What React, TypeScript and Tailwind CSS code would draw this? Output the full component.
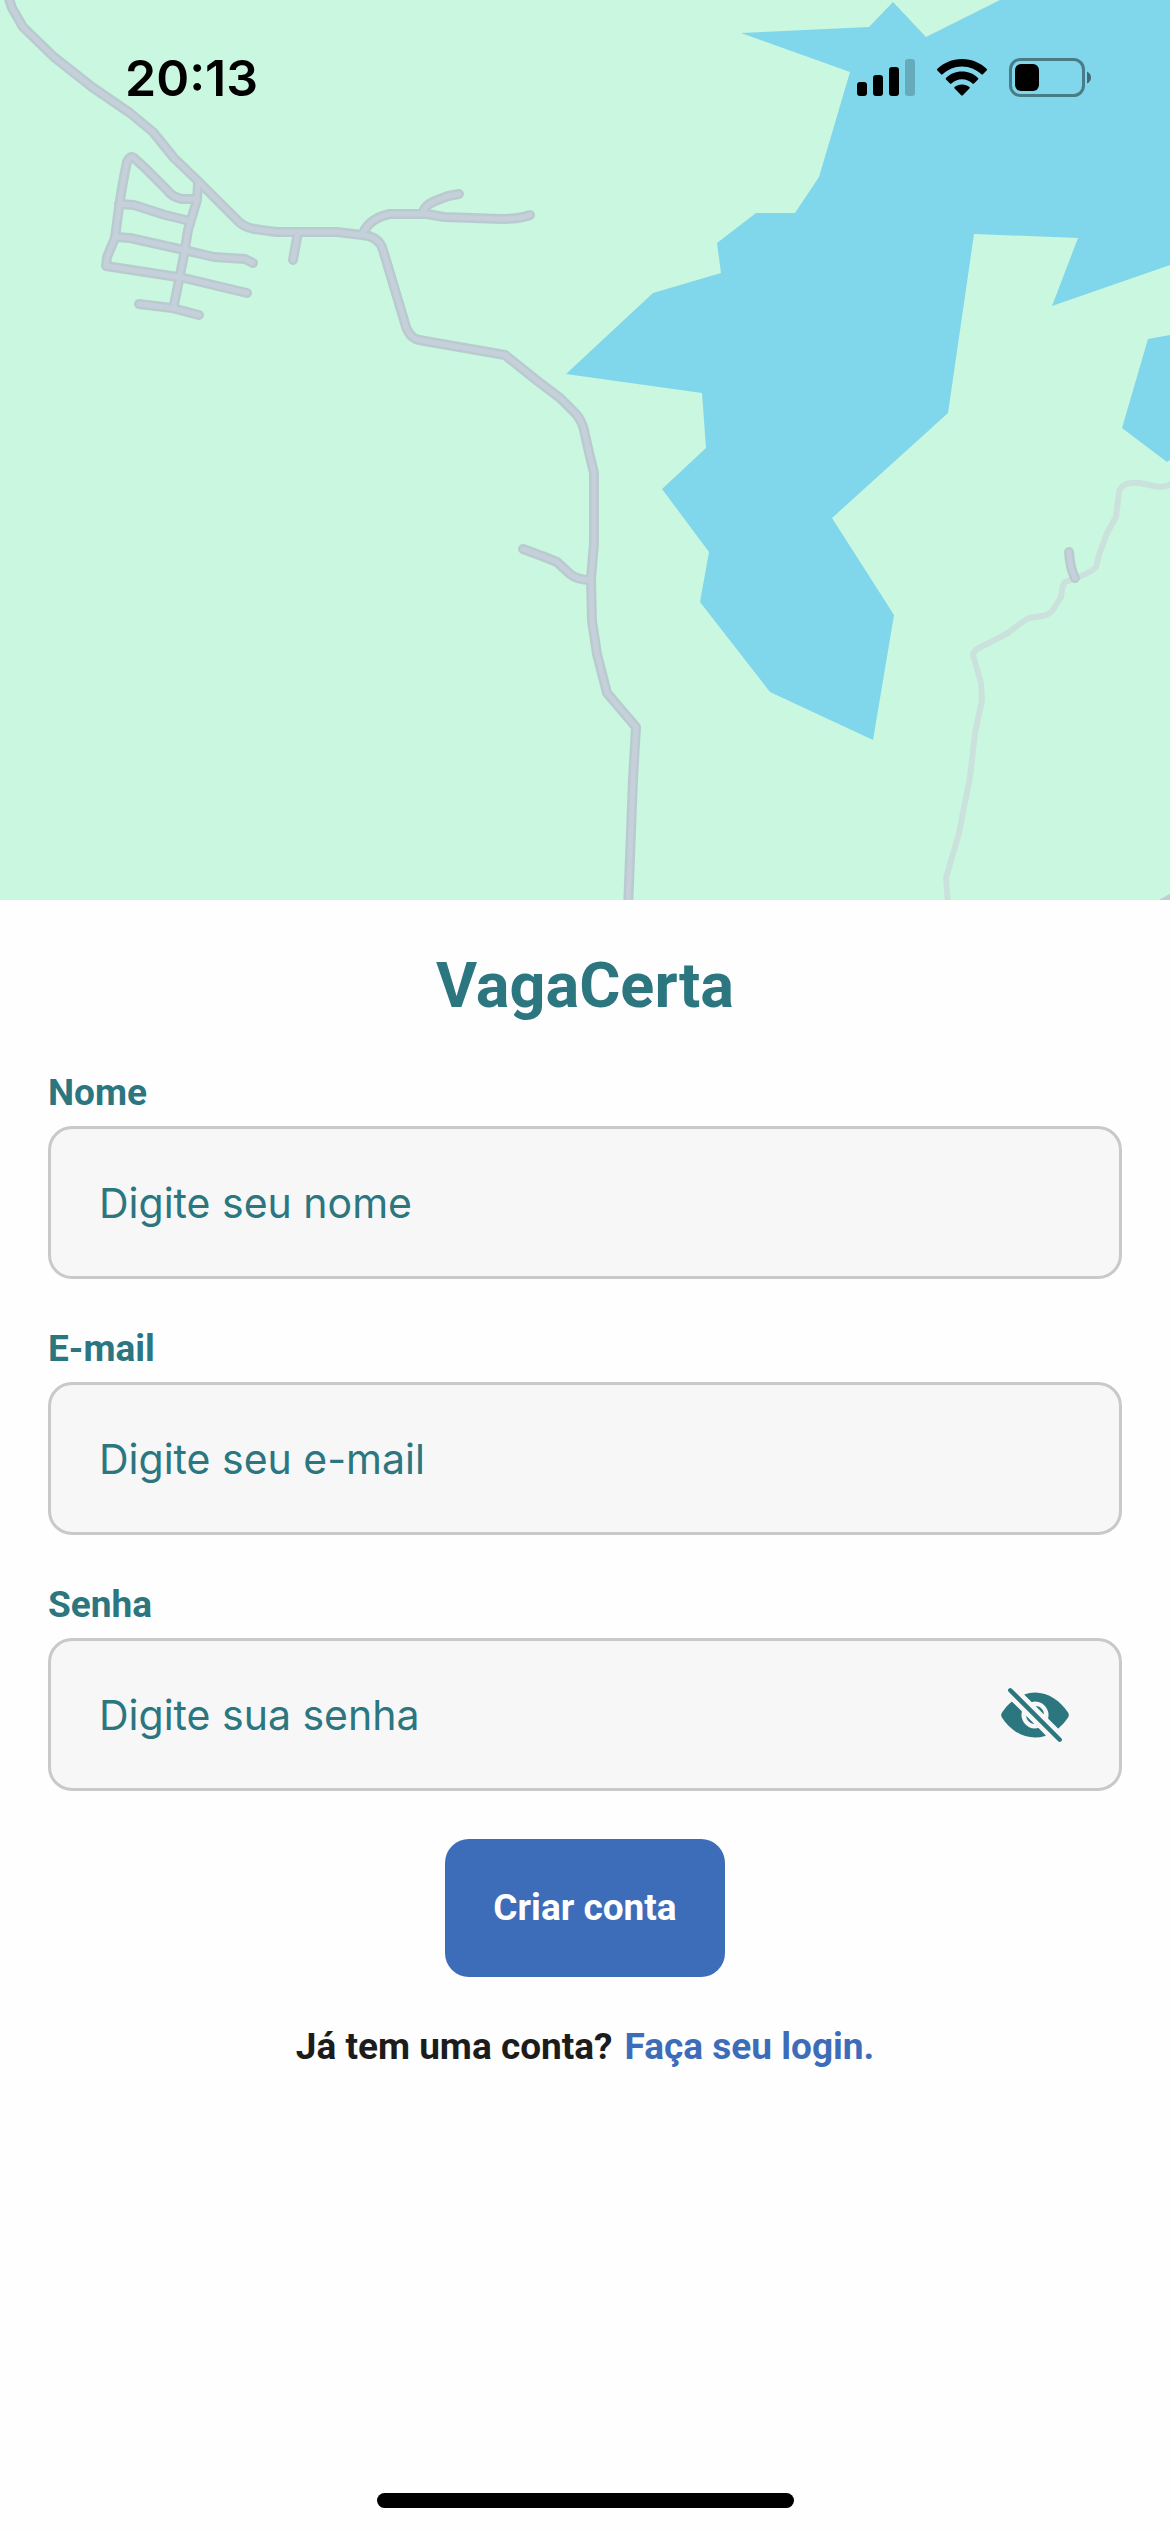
import { useState } from "react";
import type { ReactNode } from "react";
import { IoEye, IoEyeOff } from "react-icons/io5";

const ROADS = [
  "M8 -4 L12 8 L23 27 L54 57 L92 87 L130 113 L153 132 L174 158 L199 182 L237 220 Q243 227 254 229 L276 232 H337 L362 235 Q379 236 383 250 L404 320 Q408 338 419 340 L505 355 L535 379 L560 398 L576 414 Q582 421 584 430 L588 448 L594 473 V543 L591 579 L592 621 L597 654 L607 693 L636 727 L633 779 L628 910",
  "M523 549 L542 556 L557 562 L570 574 Q577 580 591 580",
  "M363 233 Q370 218 390 214 H427 L444 217 L501 219 Q520 219 530 215",
  "M423 212 Q425 205 435 201 L448 196 L459 194",
  "M298 232 L293 260",
  "M195 199 H182 Q172 197 167 190 L145 168 L134 158 Q130 155 127 162 Q123 180 119 207 L115 238 L107 257 L106 266 L184 278 L247 293",
  "M119 204 L134 205 L165 215 L190 221",
  "M115 237 L130 238 L184 250 L214 257 L245 259 L253 263",
  "M198 184 L197 200 L188 230 L184 255 L174 305",
  "M139 304 L172 308 L199 315",
  "M1069 552 Q1070 568 1075 578",
];

const MINOR_ROAD =
  "M1174 482 Q1166 489 1154 486 L1140 483 Q1122 481 1119 492 L1116 517 L1107 533 L1099 555 L1096 567 Q1092 572 1076 578 L1065 582 Q1062 586 1061 597 L1053 610 Q1049 615 1042 616 L1029 618 Q1020 623 1008 633 L981 647 Q973 651 973 655 L981 683 L982 700 L975 733 L970 777 L959 833 L946 878 L948 904";

function MapView() {
  return (
    <svg
      viewBox="0 0 1170 900"
      className="block w-full bg-[#caf7df]"
      role="img"
      aria-label="Mapa"
    >
      <g fill="#80d6ea">
        <path d="M1000 0 L926 37 L893 2 L869 27 L741 33 L850 72 L819 177 L795 213 H756 L717 243 L721 273 L653 293 L566 374 L702 393 L706 448 L662 489 L709 552 L700 602 L770 692 L873 740 L894 615 L832 518 L948 413 L974 234 L1078 238 L1052 306 L1170 265 V0 Z" />
        <path d="M1170 335 L1148 339 L1122 428 L1167 462 L1170 460 Z" />
      </g>
      <g fill="none" strokeLinecap="round" strokeLinejoin="round">
        <path d={MINOR_ROAD} stroke="#cbe2dc" strokeWidth="6" />
        {ROADS.map((d) => (
          <path key={d} d={d} stroke="#bacbd0" strokeWidth="10" />
        ))}
        {ROADS.map((d) => (
          <path key={d} d={d} stroke="#c6d0db" strokeWidth="5" />
        ))}
        <path d="M1160 904 L1174 896" stroke="#bfcdd5" strokeWidth="8" />
      </g>
    </svg>
  );
}

function StatusBar() {
  return (
    <div className="absolute inset-x-0 top-0 flex items-center justify-between pt-[46px] pr-[78px] pl-[125px] font-['Inter',sans-serif] text-black">
      <span className="text-[50px] leading-[64px] font-semibold">20:13</span>
      <div className="flex items-center gap-[22px]">
        <svg width="58" height="38" viewBox="0 0 58 38" aria-hidden="true">
          <rect x="0" y="23" width="10" height="14" rx="3" />
          <rect x="16" y="16" width="10" height="21" rx="3" />
          <rect x="32" y="8" width="10" height="29" rx="3" />
          <rect x="48" y="0" width="10" height="37" rx="3" opacity="0.2" />
        </svg>
        <svg width="50" height="38" viewBox="0 0 50 38" aria-hidden="true">
          <path d="M25 0 C35 0 43.500 4 49.600 9.800 Q50.400 10.700 49.600 11.600 L45.900 15.300 Q45.200 16 44.400 15.300 C39 10.500 32.500 7.600 25 7.600 C17.500 7.600 11 10.500 5.600 15.300 Q4.800 16 4.100 15.300 L0.400 11.600 Q-0.400 10.700 0.400 9.800 C6.500 4 15 0 25 0 Z" />
          <path d="M25 12.600 C31.500 12.600 36.800 15 41 18.900 Q41.800 19.700 41 20.500 L37 24.500 Q36.300 25.200 35.500 24.500 C32.700 22 29.300 20.300 25 20.300 C20.700 20.300 17.300 22 14.500 24.500 Q13.700 25.200 13 24.500 L9 20.500 Q8.200 19.700 9 18.900 C13.200 15 18.500 12.600 25 12.600 Z" />
          <path d="M25 25.400 C28 25.400 30.500 26.400 32.400 28 Q33.200 28.800 32.400 29.600 L25.800 36.300 Q25 37 24.200 36.300 L17.600 29.600 Q16.800 28.800 17.600 28 C19.500 26.400 22 25.400 25 25.400 Z" />
        </svg>
        <svg width="83" height="40" viewBox="0 0 83 40" aria-hidden="true">
          <rect x="1.500" y="1.500" width="73" height="36" rx="10" fill="none" stroke="#000" strokeOpacity="0.42" strokeWidth="3" />
          <rect x="6" y="6" width="24" height="27" rx="6" />
          <path d="M78 13.500 Q82 15.500 82 19.500 Q82 23.500 78 25.500 Z" opacity="0.5" />
        </svg>
      </div>
    </div>
  );
}

type FieldProps = {
  id: string;
  label: string;
  type: string;
  placeholder: string;
  children?: ReactNode;
};

function Field({ id, label, type, placeholder, children }: FieldProps) {
  return (
    <div className="flex flex-col gap-[12px]">
      <label htmlFor={id} className="text-[37px] leading-[43px] font-bold">
        {label}
      </label>
      <div className="flex items-center rounded-[24px] border-3 border-[#c9c9c9] bg-[#f7f7f7] px-[48px]">
        <input
          id={id}
          type={type}
          placeholder={placeholder}
          className="h-[147px] min-w-0 flex-1 bg-transparent font-['Inter',sans-serif] text-[41px] outline-none placeholder:text-[#2b767f] placeholder:opacity-100"
        />
        {children}
      </div>
    </div>
  );
}

export default function App() {
  const [visible, setVisible] = useState(false);
  return (
    <div className="flex min-h-screen flex-col bg-[#fefefe] font-['Roboto',sans-serif] text-[#2b767f]">
      <header className="relative">
        <MapView />
        <StatusBar />
      </header>
      <main className="flex flex-1 flex-col px-[48px] pt-[48px]">
        <h1 className="text-center text-[63px] leading-[76px] font-bold">VagaCerta</h1>
        <form className="mt-[47px] flex flex-col gap-[48px]" onSubmit={(e) => e.preventDefault()}>
          <Field id="nome" label="Nome" type="text" placeholder="Digite seu nome" />
          <Field id="email" label="E-mail" type="email" placeholder="Digite seu e-mail" />
          <Field
            id="senha"
            label="Senha"
            type={visible ? "text" : "password"}
            placeholder="Digite sua senha"
          >
            <button
              type="button"
              aria-label={visible ? "Ocultar senha" : "Mostrar senha"}
              onClick={() => setVisible(!visible)}
            >
              {visible ? <IoEye className="size-[72px]" /> : <IoEyeOff className="size-[72px]" />}
            </button>
          </Field>
          <button
            type="submit"
            className="self-center rounded-[24px] bg-[#3d6cb9] px-[48px] py-[48px] text-[37px] leading-[42px] font-bold text-white"
          >
            Criar conta
          </button>
        </form>
        <p className="mt-[48px] flex justify-center gap-[12px] text-[37px] leading-[43px] font-bold text-[#1c1c1c]">
          Já tem uma conta?
          <a href="#login" className="text-[#3d6cb9]">
            Faça seu login.
          </a>
        </p>
      </main>
      <footer className="flex justify-center pb-[24px]">
        <div className="h-[15px] w-[417px] rounded-full bg-black" />
      </footer>
    </div>
  );
}
